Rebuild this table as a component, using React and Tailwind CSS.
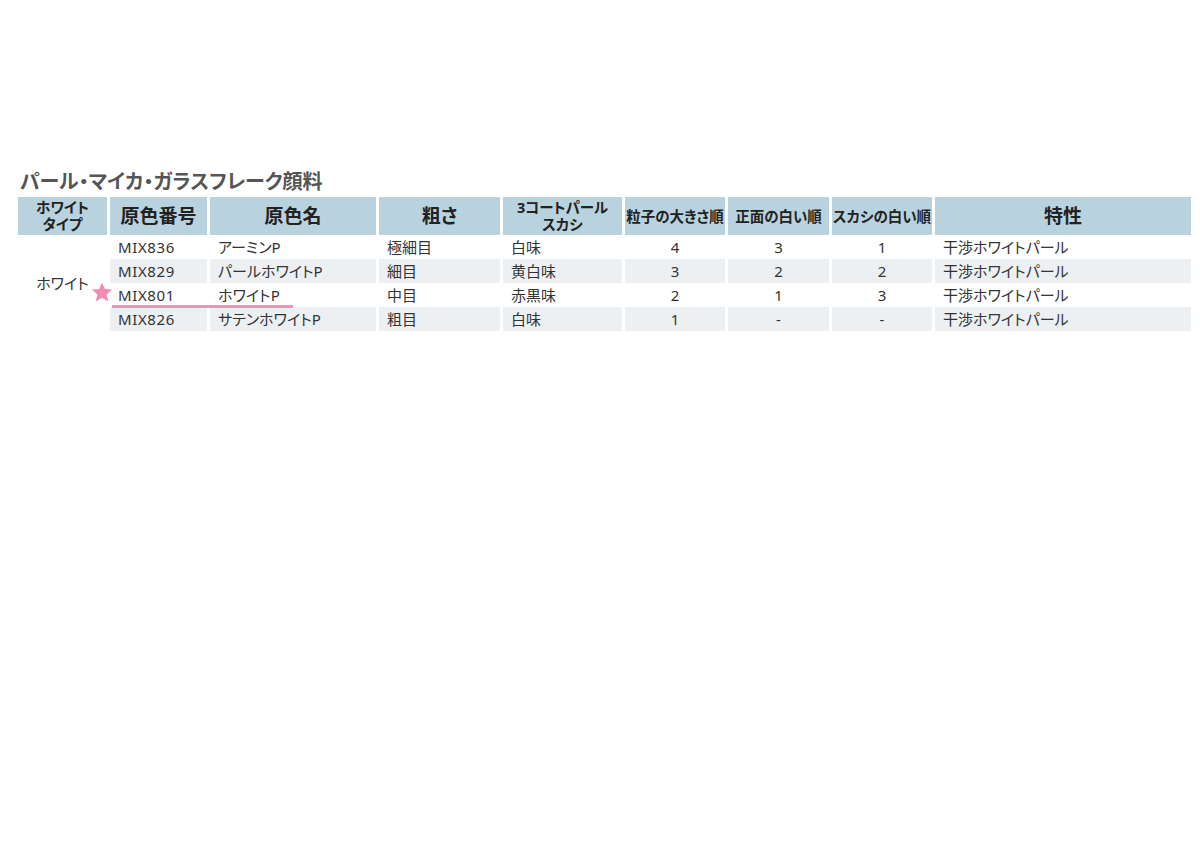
import React from "react";

const rows = [
  { code: "MIX836", name: "アーミンP", grain: "極細目", coat: "白味", size: "4", front: "3", sukashi: "1", feature: "干渉ホワイトパール", bg: "bg-white" },
  { code: "MIX829", name: "パールホワイトP", grain: "細目", coat: "黄白味", size: "3", front: "2", sukashi: "2", feature: "干渉ホワイトパール", bg: "bg-[#ecf0f3]" },
  { code: "MIX801", name: "ホワイトP", grain: "中目", coat: "赤黒味", size: "2", front: "1", sukashi: "3", feature: "干渉ホワイトパール", bg: "bg-white" },
  { code: "MIX826", name: "サテンホワイトP", grain: "粗目", coat: "白味", size: "1", front: "-", sukashi: "-", feature: "干渉ホワイトパール", bg: "bg-[#ecf0f3]" },
];

function Head({ children, small }) {
  return (
    <div
      className={
        "bg-[#b9d3de] flex flex-col items-center justify-center text-center font-bold text-[#222] " +
        (small ? "text-[14.5px] leading-[17px]" : "text-[19px] leading-[22px]")
      }
    >
      {children}
    </div>
  );
}

function Cell({ children, bg, center, wide }) {
  return (
    <div
      className={
        bg +
        " flex items-center text-[15px] text-[#333] " +
        (center ? "justify-center" : "pl-[8px]") +
        (wide ? " tracking-[0.6px]" : "")
      }
    >
      {children}
    </div>
  );
}

export default function App() {
  return (
    <div
      className="w-[1200px] h-[848px] bg-white pl-[18px] pt-[170px] [font-feature-settings:'palt']"
      style={{ fontFamily: '"Noto Sans", "Noto Sans CJK JP", sans-serif' }}
    >
      <h1
        className="text-[20px] leading-[22px] font-bold text-[#555] pl-[2px]"
        style={{ fontFamily: '"Noto Sans CJK JP", sans-serif' }}
      >
        パール・マイカ・ガラスフレーク顔料
      </h1>
      <div className="relative mt-[5px] w-[1173px]">
        <div className="grid grid-cols-[89px_97px_166px_121px_119px_100px_101px_100px_256px] grid-rows-[38px_24px_24px_24px_24px] gap-x-[3px]">
          <Head small>
            <span>ホワイト</span>
            <span>タイプ</span>
          </Head>
          <Head>原色番号</Head>
          <Head>原色名</Head>
          <Head>粗さ</Head>
          <Head small>
            <span>3コートパール</span>
            <span>スカシ</span>
          </Head>
          <Head small>粒子の大きさ順</Head>
          <Head small>正面の白い順</Head>
          <Head small>スカシの白い順</Head>
          <Head>特性</Head>

          <div className="row-span-4 flex items-center justify-center text-[15px] text-[#333]">
            ホワイト
          </div>
          {rows.map((r) => (
            <React.Fragment key={r.code}>
              <Cell bg={r.bg} wide>{r.code}</Cell>
              <Cell bg={r.bg}>{r.name}</Cell>
              <Cell bg={r.bg}>{r.grain}</Cell>
              <Cell bg={r.bg}>{r.coat}</Cell>
              <Cell bg={r.bg} center>{r.size}</Cell>
              <Cell bg={r.bg} center>{r.front}</Cell>
              <Cell bg={r.bg} center>{r.sukashi}</Cell>
              <Cell bg={r.bg}>{r.feature}</Cell>
            </React.Fragment>
          ))}
        </div>
        <svg
          className="absolute left-[73px] top-[84px] w-[22px] h-[22px]"
          viewBox="0 0 24 24"
        >
          <path
            d="M12 1.5l3.1 7.3 7.9.6-6 5.2 1.8 7.7L12 18.2l-6.8 4.1 1.8-7.7-6-5.2 7.9-.6z"
            fill="#f48cb1"
          />
        </svg>
        <div className="absolute left-[94px] top-[108px] w-[181px] h-[3px] bg-[#f58fb5]" />
      </div>
    </div>
  );
}
